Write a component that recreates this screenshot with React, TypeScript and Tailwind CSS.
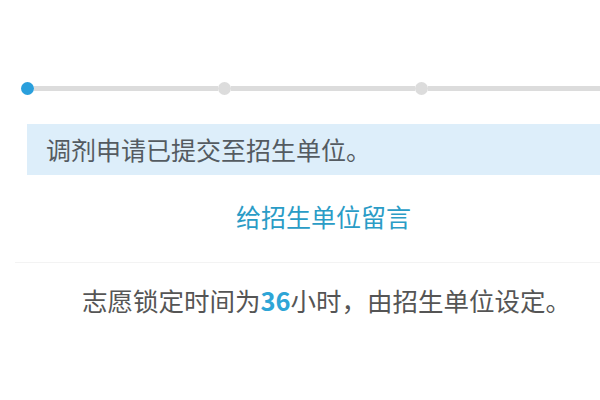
const font = { fontFamily: '"Noto Sans CJK SC", "Noto Sans", sans-serif' };

function Stepper() {
  // 三个节点：第一个为当前步骤（蓝色），其余为灰色
  return (
    <div className="mt-[82px] flex h-[13px] items-center">
      <div className="ml-[21px] h-[13px] w-[13px] shrink-0 rounded-full bg-[#2a9fdc]" />
      <div className="h-[5px] w-[184px] shrink-0 bg-[#dcdcdc]" />
      <div className="h-[13px] w-[13px] shrink-0 rounded-full bg-[#dcdcdc]" />
      <div className="h-[5px] w-[184px] shrink-0 bg-[#dcdcdc]" />
      <div className="h-[13px] w-[13px] shrink-0 rounded-full bg-[#dcdcdc]" />
      <div className="h-[5px] flex-1 bg-[#dcdcdc]" />
    </div>
  );
}

export default function App() {
  return (
    <div className="flex h-[400px] w-[600px] flex-col overflow-hidden bg-white" style={font}>
      <Stepper />

      <div className="ml-[27px] mt-[29px] flex h-[51px] items-center bg-[#ddeefa] pl-[19px]">
        <span className="text-[25px] leading-none text-[#545b61]">调剂申请已提交至招生单位。</span>
      </div>

      <div className="mt-[23px] flex h-[36px] items-center pl-[236px]">
        <span className="text-[25px] leading-none text-[#2a9cc6]">给招生单位留言</span>
      </div>

      <div className="ml-[15px] mt-[28px] h-px bg-[#f3f3f3]" />

      <div className="mt-[19px] flex h-[36px] items-center pl-[82px]">
        <span className="text-[25.5px] leading-none text-[#555555]">
          志愿锁定时间为<span className="font-bold text-[#2ea5d6]">36</span>小时，由招生单位设定。
        </span>
      </div>
    </div>
  );
}
